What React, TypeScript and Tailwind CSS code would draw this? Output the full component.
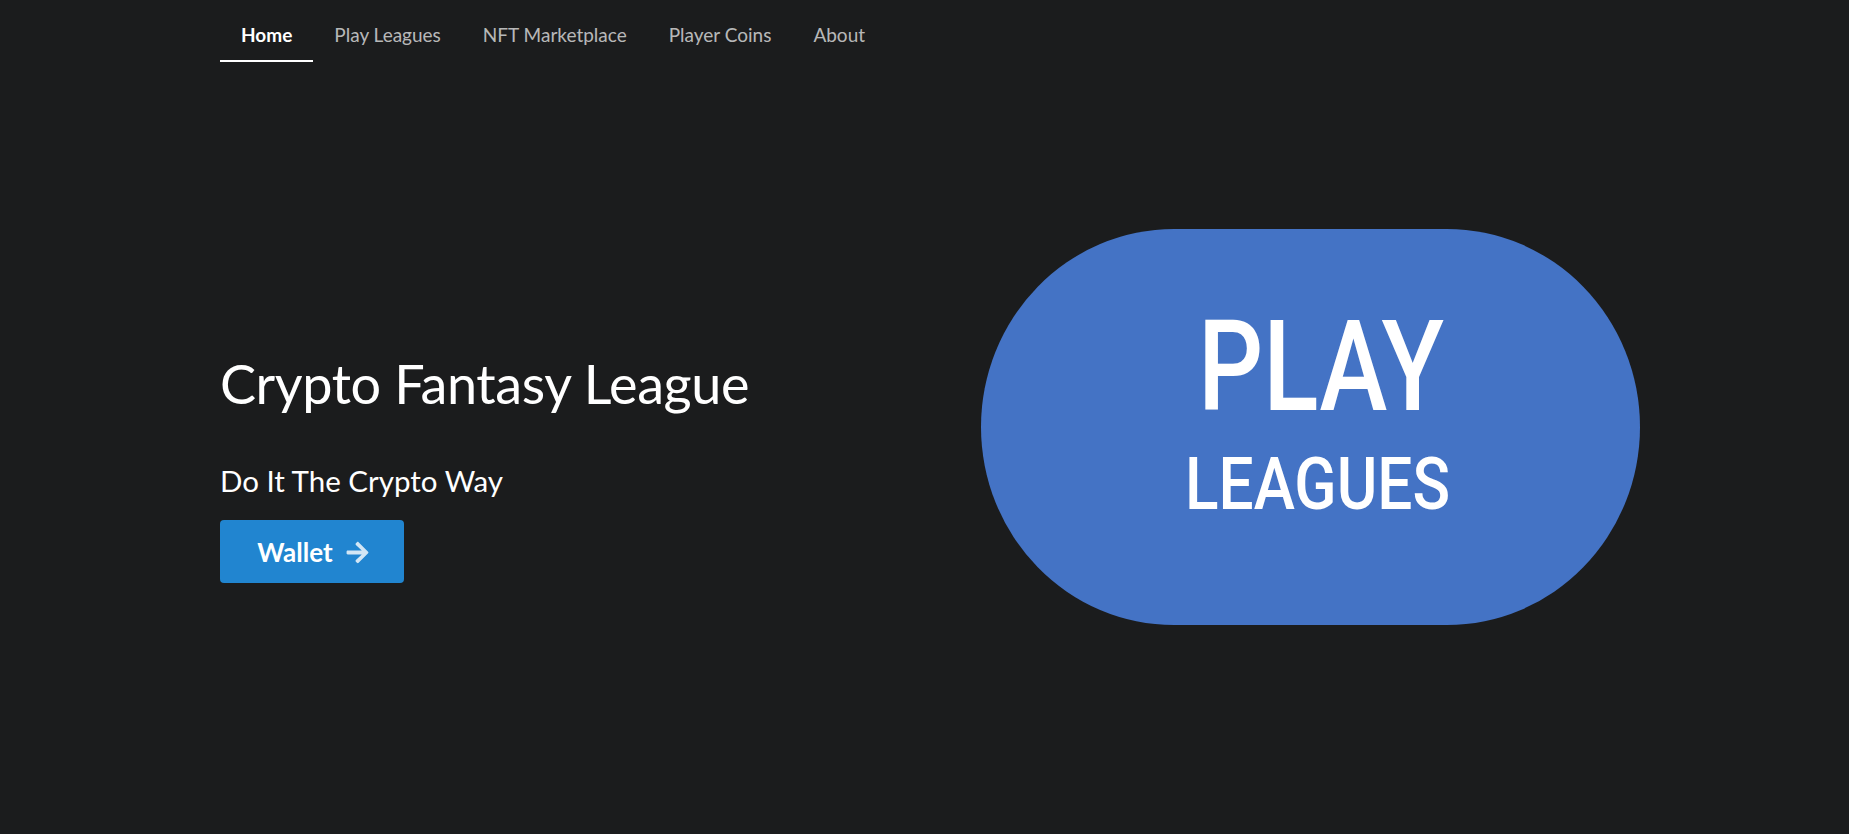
import { FaArrowRight } from "react-icons/fa";

const tabs = ["Home", "Play Leagues", "NFT Marketplace", "Player Coins", "About"];

function NavBar() {
  return (
    <nav className="flex flex-row items-end pl-[220px] h-[62px]">
      {tabs.map((t, i) => (
        <a
          key={t}
          href="#"
          className={
            i === 0
              ? "px-[21px] pt-[24px] pb-[13px] leading-[1.2] text-[19px] font-bold text-white border-b-2 border-white"
              : "px-[21px] pt-[24px] pb-[13px] leading-[1.2] text-[19px] text-white/70 border-b-2 border-transparent"
          }
        >
          {t}
        </a>
      ))}
    </nav>
  );
}

function PlayLeaguesBadge() {
  return (
    <div className="w-[659px] h-[396px] rounded-[193px/198px] bg-[#4473c5] flex items-center justify-center">
      <svg width="659" height="396" viewBox="0 0 659 396">
        <text
          x="217"
          y="181"
          textLength="246"
          lengthAdjust="spacingAndGlyphs"
          fill="#ffffff"
          fontFamily="Roboto, 'DejaVu Sans', sans-serif"
          fontWeight="500"
          fontSize="126"
        >
          PLAY
        </text>
        <text
          x="204"
          y="280"
          textLength="265"
          lengthAdjust="spacingAndGlyphs"
          fill="#ffffff"
          fontFamily="Roboto, 'DejaVu Sans', sans-serif"
          fontWeight="500"
          fontSize="73"
        >
          LEAGUES
        </text>
      </svg>
    </div>
  );
}

export default function App() {
  return (
    <div className="min-h-screen w-full bg-[#1b1c1d] font-['Lato','Noto_Sans',sans-serif]">
      <NavBar />
      <div className="flex flex-row justify-between pl-[220px] pr-[209px]">
        <div className="flex flex-col items-start pt-[290px]">
          <h1 className="text-[54px] leading-[1.2] tracking-[-0.4px] text-white font-normal">
            Crypto Fantasy League
          </h1>
          <h2 className="mt-[46px] text-[29.5px] leading-[1.2] text-white font-normal">
            Do It The Crypto Way
          </h2>
          <button className="mt-[22px] w-[184px] h-[63px] rounded-[4px] bg-[#2185d0] text-white text-[26px] font-bold flex flex-row items-center justify-center gap-[12px] pl-[3px] pt-[1px]">
            <span>Wallet</span>
            <FaArrowRight className="opacity-80" size={25} />
          </button>
        </div>
        <div className="pt-[167px]">
          <PlayLeaguesBadge />
        </div>
      </div>
    </div>
  );
}
